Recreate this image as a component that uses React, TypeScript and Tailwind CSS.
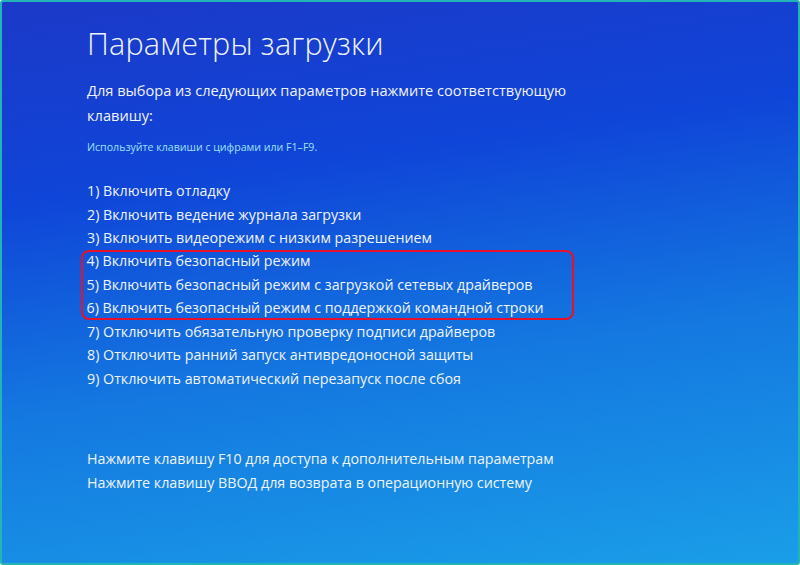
import React from "react";

const items1 = [
  "1) Включить отладку",
  "2) Включить ведение журнала загрузки",
  "3) Включить видеорежим с низким разрешением",
];
const items2 = [
  "4) Включить безопасный режим",
  "5) Включить безопасный режим с загрузкой сетевых драйверов",
  "6) Включить безопасный режим с поддержкой командной строки",
];
const items3 = [
  "7) Отключить обязательную проверку подписи драйверов",
  "8) Отключить ранний запуск антивредоносной защиты",
  "9) Отключить автоматический перезапуск после сбоя",
];

export default function App() {
  return (
    <div
      className="w-[800px] h-[565px] overflow-hidden border-2 border-[#22b4b8] rounded-[3px] bg-[linear-gradient(172deg,#1c39c8_0%,#0f45d8_30%,#1478e0_62%,#1a9ee8_100%)] text-[#f0f4fc]"
      style={{ fontFamily: '"Open Sans", "Noto Sans", sans-serif' }}
    >
      <div className="pl-[85px] pt-[21px] flex flex-col">
        <h1 className="text-[30.6px] font-light leading-[40px] tracking-[0.2px]">Параметры загрузки</h1>
        <p className="mt-[15px] text-[14.6px] leading-[25px] w-[480px]">
          Для выбора из следующих параметров нажмите соответствующую клавишу:
        </p>
        <p className="mt-[11px] text-[10.6px] leading-[16px] text-[#9fe0f6]">
          Используйте клавиши с цифрами или F1–F9.
        </p>
        <div className="mt-[24px] flex flex-col text-[14.25px] leading-[23.6px]">
          {items1.map((t) => (
            <div key={t}>{t}</div>
          ))}
          <div className="-ml-[6px] w-[493px] border-[2.5px] border-[#e8102a] rounded-[8px] pl-[3.5px]">
            <div className="-my-[2.5px] flex flex-col">
              {items2.map((t) => (
                <div key={t}>{t}</div>
              ))}
            </div>
          </div>
          {items3.map((t) => (
            <div key={t}>{t}</div>
          ))}
        </div>
        <div className="mt-[57px] flex flex-col text-[14.25px] leading-[23.6px]">
          <div>Нажмите клавишу F10 для доступа к дополнительным параметрам</div>
          <div>Нажмите клавишу ВВОД для возврата в операционную систему</div>
        </div>
      </div>
    </div>
  );
}
